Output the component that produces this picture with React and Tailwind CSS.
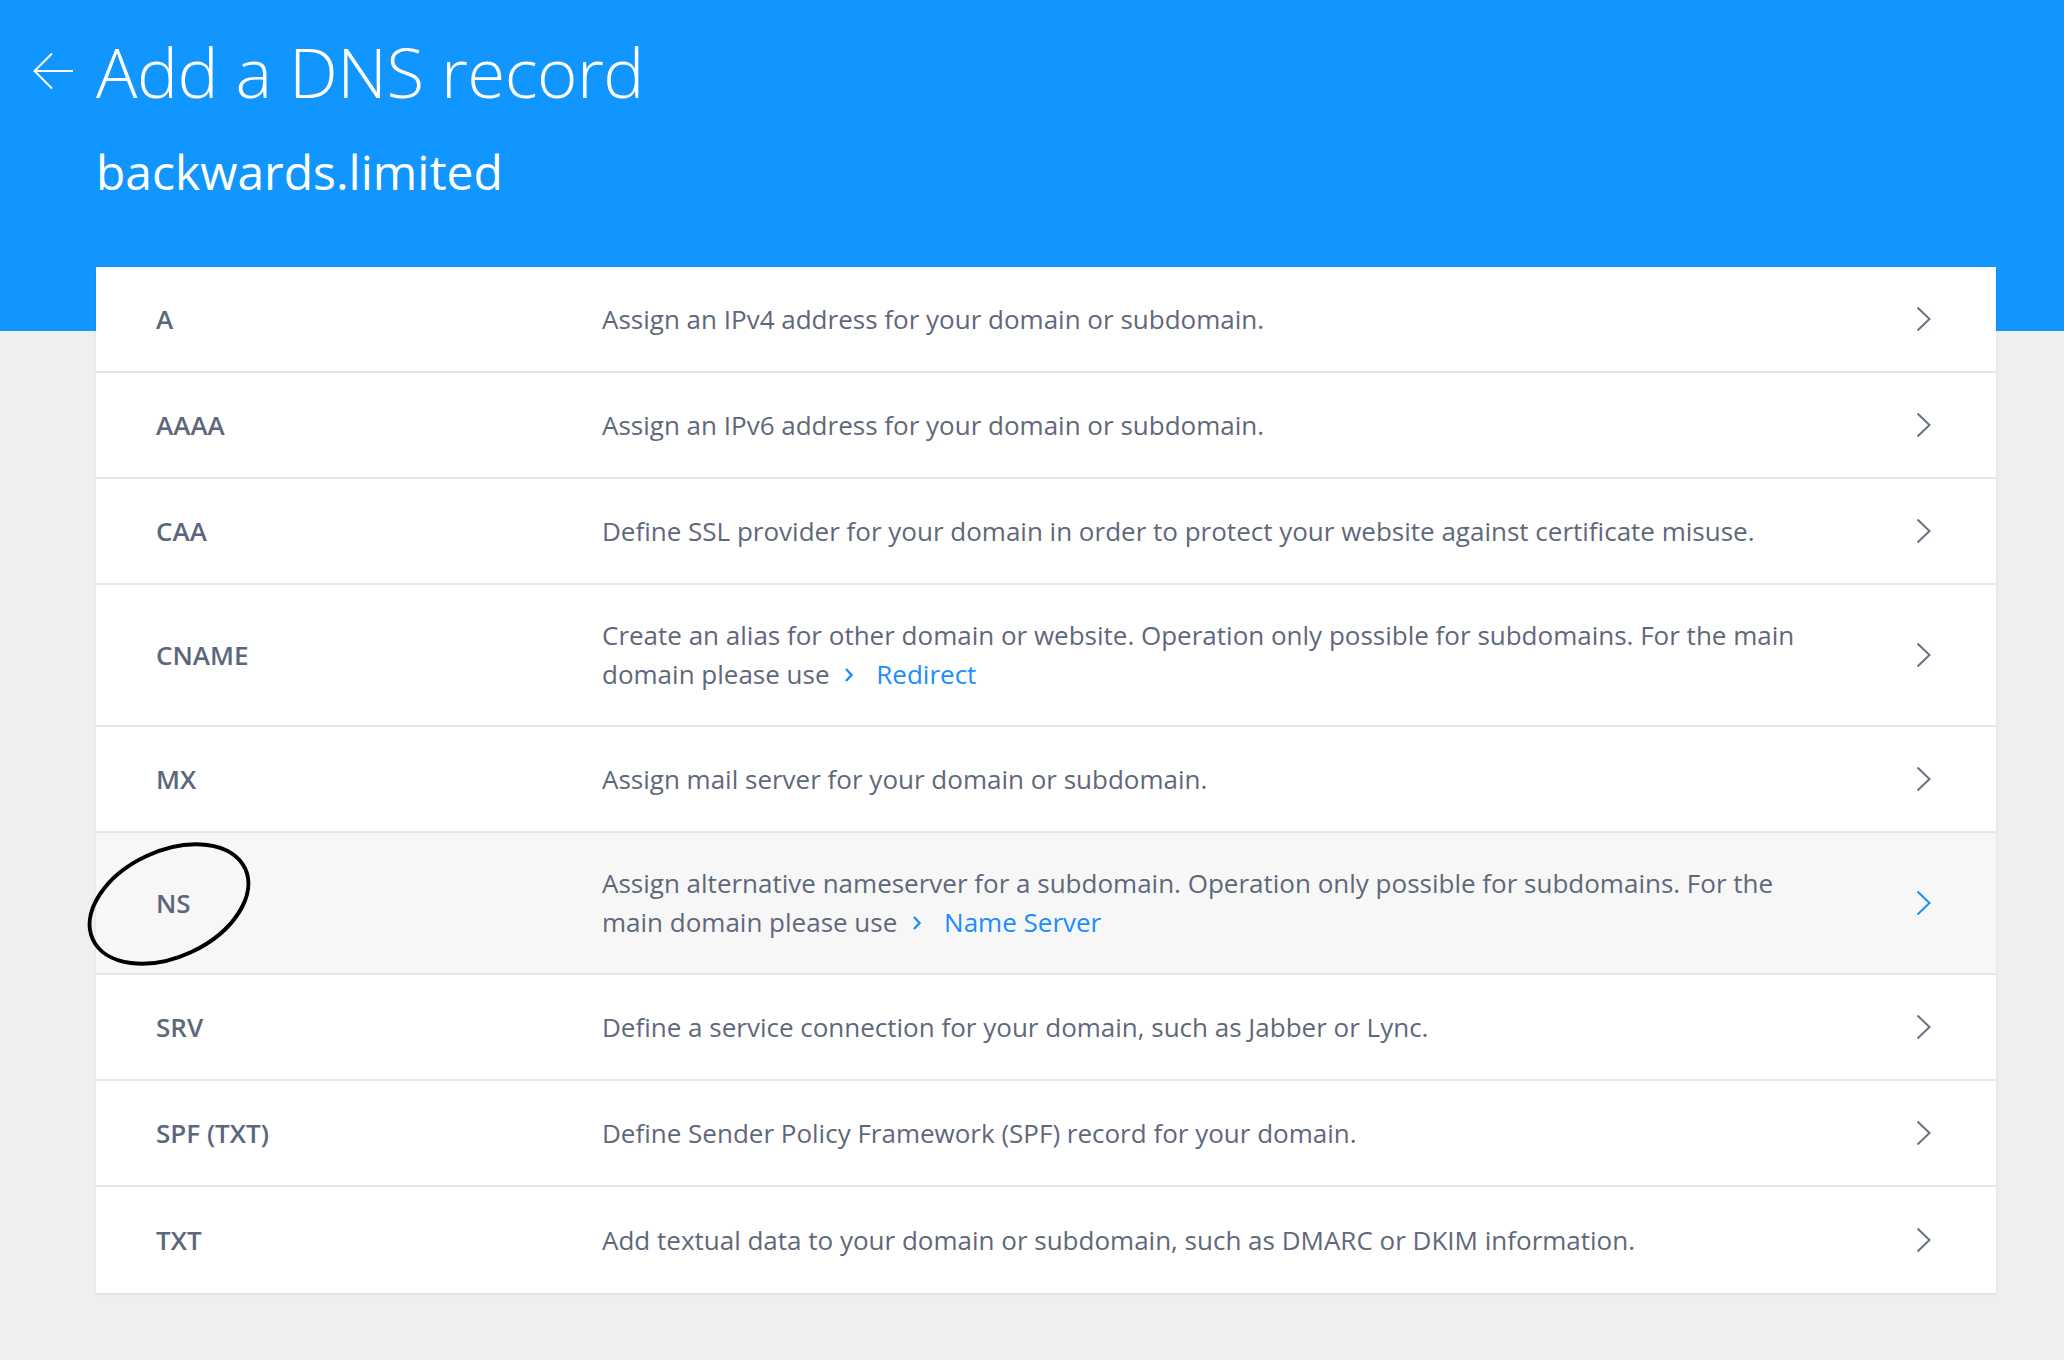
import React from 'react';

const records = [
    { type: 'A', desc: 'Assign an IPv4 address for your domain or subdomain.' },
    { type: 'AAAA', desc: 'Assign an IPv6 address for your domain or subdomain.' },
    { type: 'CAA', desc: 'Define SSL provider for your domain in order to protect your website against certificate misuse.' },
    { type: 'CNAME', desc: 'Create an alias for other domain or website. Operation only possible for subdomains. For the main domain please use', link: 'Redirect' },
    { type: 'MX', desc: 'Assign mail server for your domain or subdomain.' },
    { type: 'NS', desc: 'Assign alternative nameserver for a subdomain. Operation only possible for subdomains. For the main domain please use', link: 'Name Server', active: true },
    { type: 'SRV', desc: 'Define a service connection for your domain, such as Jabber or Lync.' },
    { type: 'SPF (TXT)', desc: 'Define Sender Policy Framework (SPF) record for your domain.' },
    { type: 'TXT', desc: 'Add textual data to your domain or subdomain, such as DMARC or DKIM information.' },
];

const Chevron = ({ active }) => (
    <svg width="16" height="26" viewBox="0 0 16 26" fill="none" className="shrink-0">
        <path d="M1.5 1.5 L13.5 13 L1.5 24.5" stroke={active ? '#1a8dff' : '#687186'} strokeWidth="2" />
    </svg>
);

const SmallChevron = () => (
    <svg width="10" height="16" viewBox="0 0 10 16" fill="none" className="inline-block ml-[8px] -mt-[4px] align-middle">
        <path d="M2 2 L7.5 8 L2 14" stroke="#1a8dff" strokeWidth="2.4" />
    </svg>
);

const RecordRow = ({ rec, last }) => (
    <div className={`relative flex items-center pl-[60px] pr-[64px] ${rec.link ? 'py-[31px]' : 'h-[106px]'} ${rec.active ? 'bg-[#f7f7f7]' : 'bg-white'} ${last ? '' : 'border-b-2 border-[#e6e6e6]'}`}>
        <div className="w-[446px] shrink-0 text-[26px] font-semibold text-[#5d677c]">{rec.type}</div>
        <div className="w-[1205px] text-[26px] leading-[39px] text-[#5f687b]">
            {rec.desc}
            {rec.link && (
                <>
                    {' '}<SmallChevron /><span className="text-[#1a8dff] ml-[22px]">{rec.link}</span>
                </>
            )}
        </div>
        <div className="ml-auto"><Chevron active={rec.active} /></div>
        {rec.active && (
            <svg width="180" height="140" viewBox="0 0 180 140" fill="none" className="absolute left-[-17px] top-[1px] pointer-events-none">
                <ellipse cx="90" cy="70" rx="84" ry="53" transform="rotate(-25 90 70)" stroke="#000" strokeWidth="4" />
            </svg>
        )}
    </div>
);

export default function App() {
    return (
        <div className="min-h-[1360px] bg-[#efefef] font-['Open_Sans',sans-serif]">
            {/* Header */}
            <div className="h-[331px] bg-[#1196ff] text-white pt-[36px]">
                <div className="flex items-center pl-[33px] gap-[23px]">
                    <svg width="40" height="38" viewBox="0 0 40 38" fill="none">
                        <path d="M19 1.5 L1.5 19 L19 36.5 M1.5 19 H40" stroke="#fff" strokeWidth="2" />
                    </svg>
                    <h1 className="text-[69px] leading-[70px] font-light tracking-[-0.5px]">Add a DNS record</h1>
                </div>
                <div className="pl-[96px] mt-[42px] text-[48px] leading-[48px]">backwards.limited</div>
            </div>

            {/* Records */}
            <div className="ml-[96px] w-[1900px] -mt-[64px] bg-white shadow-[0_1px_3px_rgba(0,0,0,0.08)]">
                {records.map((rec, i) => (
                    <RecordRow key={rec.type} rec={rec} last={i === records.length - 1} />
                ))}
            </div>
        </div>
    );
}
